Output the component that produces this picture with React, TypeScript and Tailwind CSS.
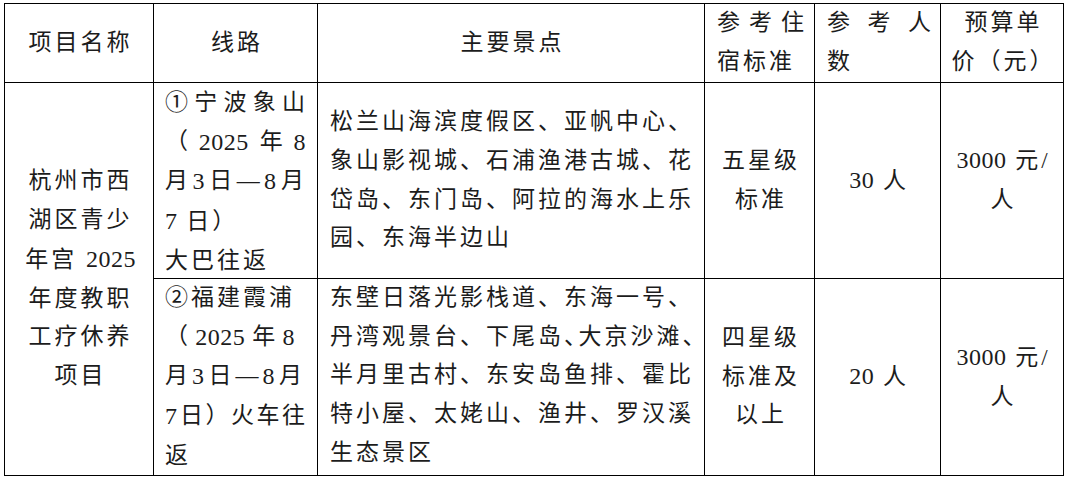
import React from "react";

function N({ children }: { children: React.ReactNode }) {
  return <span className="text-[24px] tracking-[0.5px]">{children}</span>;
}

function J({ items, className }: { items: React.ReactNode[]; className: string }) {
  return (
    <div className={className}>
      {items.map((t, i) => (
        <span key={i} className="tracking-normal whitespace-nowrap">
          {t}
        </span>
      ))}
    </div>
  );
}

function L({ children }: { children: React.ReactNode }) {
  return <div className="whitespace-nowrap">{children}</div>;
}

const cell = "border-r border-b border-black";

export default function App() {
  return (
    <div className="bg-white w-[1068px] h-[479px] overflow-hidden pt-[3px] pl-[4px]">
      <div className="grid grid-cols-[149px_164px_387px_110px_126px_123px] grid-rows-[79px_196px_197px] w-fit border-l border-t border-black font-['Liberation_Serif','Noto_Sans_CJK_SC',serif] text-[23px] leading-[38.7px] tracking-[3px] text-[#1c1c1c]">
        {/* header */}
        <div className={`${cell} flex items-center justify-center pl-[3px]`}>
          <L>项目名称</L>
        </div>
        <div className={`${cell} flex items-center justify-center pl-[3px]`}>
          <L>线路</L>
        </div>
        <div className={`${cell} flex items-center justify-center pl-[3px]`}>
          <L>主要景点</L>
        </div>
        <div className={`${cell} flex flex-col justify-center pl-[12px]`}>
          <J items={["参", "考", "住"]} className="flex justify-between w-[87px]" />
          <L>宿标准</L>
        </div>
        <div className={`${cell} flex flex-col justify-center pl-[12px]`}>
          <J items={["参", "考", "人"]} className="flex justify-between w-[104px]" />
          <L>数</L>
        </div>
        <div className={`${cell} flex flex-col items-center justify-center pl-[3px]`}>
          <L>预算单</L>
          <L>价（元）</L>
        </div>

        {/* project name, spans both rows */}
        <div className={`${cell} row-span-2 flex flex-col items-center justify-center pl-[3px]`}>
          <L>杭州市西</L>
          <L>湖区青少</L>
          <L>
            年宫 <N>2025</N>
          </L>
          <L>年度教职</L>
          <L>工疗休养</L>
          <L>项目</L>
        </div>

        {/* row 1 */}
        <div className={`${cell} flex flex-col pl-[11px] pt-[1px]`}>
          <J items={["①", "宁", "波", "象", "山"]} className="flex justify-between w-[140px]" />
          <J items={["（", <N key="a">2025</N>, "年", <N key="b">8</N>]} className="flex justify-between w-[141px]" />
          <J items={["月", <N key="a">3</N>, "日", "—", <N key="b">8</N>, "月"]} className="flex justify-between w-[139px]" />
          <L>
            <N>7</N> 日）
          </L>
          <L>大巴往返</L>
        </div>
        <div className={`${cell} flex flex-col justify-center pl-[12px]`}>
          <L>松兰山海滨度假区、亚帆中心、</L>
          <L>象山影视城、石浦渔港古城、花</L>
          <L>岱岛、东门岛、阿拉的海水上乐</L>
          <L>园、东海半边山</L>
        </div>
        <div className={`${cell} flex flex-col items-center justify-center pl-[3px]`}>
          <L>五星级</L>
          <L>标准</L>
        </div>
        <div className={`${cell} flex flex-col items-center justify-center pl-[3px]`}>
          <L>
            <N>30</N> 人
          </L>
        </div>
        <div className={`${cell} flex flex-col items-center justify-center pl-[3px]`}>
          <L>
            <N>3000</N> 元/
          </L>
          <L>人</L>
        </div>

        {/* row 2 */}
        <div className={`${cell} flex flex-col pl-[11px]`}>
          <L>②福建霞浦</L>
          <J items={["（", <N key="a">2025</N>, "年", <N key="b">8</N>]} className="flex justify-between w-[130px]" />
          <J items={["月", <N key="a">3</N>, "日", "—", <N key="b">8</N>, "月"]} className="flex justify-between w-[137px]" />
          <J items={[<N key="a">7</N>, "日", "）", "火", "车", "往"]} className="flex justify-between w-[140px]" />
          <L>返</L>
        </div>
        <div className={`${cell} flex flex-col pl-[12px]`}>
          <L>东壁日落光影栈道、东海一号、</L>
          <L>
            丹湾观景台、下尾岛
            <span className="[font-feature-settings:'halt']">、</span>
            大京沙滩、
          </L>
          <L>半月里古村、东安岛鱼排、霍比</L>
          <L>特小屋、太姥山、渔井、罗汉溪</L>
          <L>生态景区</L>
        </div>
        <div className={`${cell} flex flex-col items-center justify-center pl-[3px]`}>
          <L>四星级</L>
          <L>标准及</L>
          <L>以上</L>
        </div>
        <div className={`${cell} flex flex-col items-center justify-center pl-[3px]`}>
          <L>
            <N>20</N> 人
          </L>
        </div>
        <div className={`${cell} flex flex-col items-center justify-center pl-[3px]`}>
          <L>
            <N>3000</N> 元/
          </L>
          <L>人</L>
        </div>
      </div>
    </div>
  );
}
